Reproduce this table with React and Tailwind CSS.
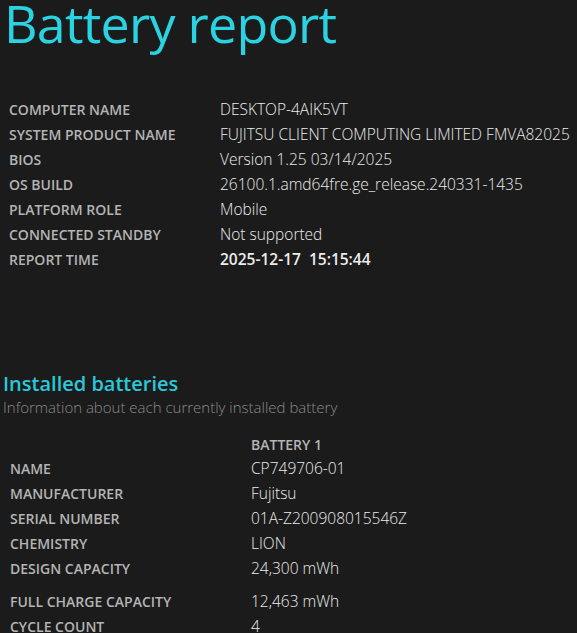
const systemInfo = [
  ['COMPUTER NAME', 'DESKTOP-4AIK5VT'],
  ['SYSTEM PRODUCT NAME', 'FUJITSU CLIENT COMPUTING LIMITED FMVA82025'],
  ['BIOS', 'Version 1.25 03/14/2025'],
  ['OS BUILD', '26100.1.amd64fre.ge_release.240331-1435'],
  ['PLATFORM ROLE', 'Mobile'],
  ['CONNECTED STANDBY', 'Not supported'],
];

const battery = [
  ['NAME', 'CP749706-01'],
  ['MANUFACTURER', 'Fujitsu'],
  ['SERIAL NUMBER', '01A-Z200908015546Z'],
  ['CHEMISTRY', 'LION'],
  ['DESIGN CAPACITY', '24,300 mWh'],
];

function Row({ label, value, valueClass = 'font-light', labelCol = 'w-[220px] pl-[9px]' }) {
  return (
    <div className="flex h-[25px] items-center">
      <div className={`${labelCol} shrink-0 text-[14px] font-semibold text-[#b4b4b4]`}>{label}</div>
      <div className={`whitespace-pre text-[15.5px] text-[#ececec] ${valueClass}`}>{value}</div>
    </div>
  );
}

export default function App() {
  return (
    <div
      className="h-[633px] w-[577px] overflow-hidden bg-[#1b1b1b]"
      style={{ fontFamily: '"Open Sans", "Noto Sans", sans-serif' }}
    >
      <h1 className="pl-[4px] text-[52px] font-normal leading-[46px] tracking-[-0.75px] text-[#2ad2e2]">
        Battery report
      </h1>

      <div className="mt-[51px]">
        {systemInfo.map(([l, v]) => (
          <Row key={l} label={l} value={v} />
        ))}
        <Row label="REPORT TIME" value="2025-12-17  15:15:44" valueClass="font-semibold" />
      </div>

      <h2 className="mt-[99px] pl-[3px] text-[20px] font-semibold leading-[26px] text-[#2ac8d8]">
        Installed batteries
      </h2>
      <p className="pl-[3px] text-[15px] font-light leading-[21px] text-[#8a8a8a]">
        Information about each currently installed battery
      </p>

      <div className="mt-[14px]">
        <div className="flex h-[24px] items-center">
          <div className="w-[251px] shrink-0" />
          <div className="text-[14px] font-semibold text-[#b4b4b4]">BATTERY 1</div>
        </div>
        {battery.map(([l, v]) => (
          <Row key={l} label={l} value={v} labelCol="w-[251px] pl-[10px]" />
        ))}
        <div className="h-[8px]" />
        <Row label="FULL CHARGE CAPACITY" value="12,463 mWh" labelCol="w-[251px] pl-[10px]" />
        <Row label="CYCLE COUNT" value="4" labelCol="w-[251px] pl-[10px]" />
      </div>
    </div>
  );
}
